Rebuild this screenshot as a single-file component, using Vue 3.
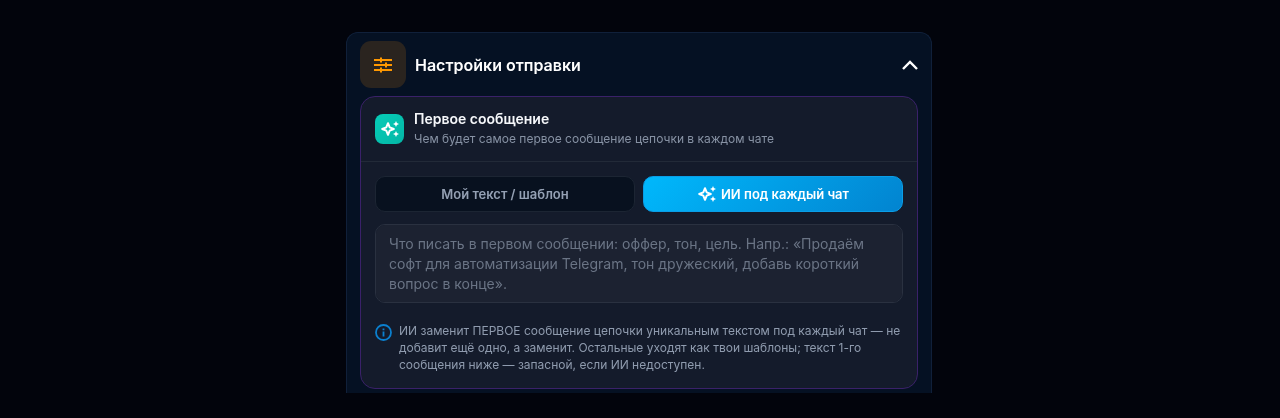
<template>
  <main class="page">
    <section class="panel">
      <button type="button" class="panel-head" :aria-expanded="open" @click="open = !open">
        <span class="panel-icon">
          <svg width="18" height="16" viewBox="0 0 18 16" fill="none" stroke="currentColor" stroke-width="2">
            <path d="M0 3h18M0 8h18M0 13h18" />
            <path d="M7 .5v5M12 5.500v5M7 10.500v5" />
          </svg>
        </span>
        <span class="panel-title">Настройки отправки</span>
        <svg class="chevron" :class="{ closed: !open }" width="16" height="10" viewBox="0 0 16 10" fill="none" stroke="currentColor" stroke-width="2.4">
          <path d="M1 9l7-7 7 7" />
        </svg>
      </button>

      <div v-if="open" class="card">
        <header class="card-head">
          <span class="card-icon">
            <svg class="sparkles" width="20" height="20" viewBox="0 0 20 20">
              <path class="star" :d="star" />
              <path class="dots" :d="dots" />
            </svg>
          </span>
          <div>
            <h2 class="card-title">Первое сообщение</h2>
            <p class="card-sub">Чем будет самое первое сообщение цепочки в каждом чате</p>
          </div>
        </header>

        <div class="card-body">
          <div class="modes">
            <button
              v-for="m in modes"
              :key="m.id"
              type="button"
              class="mode"
              :class="{ active: mode === m.id }"
              :aria-pressed="mode === m.id"
              @click="mode = m.id"
            >
              <svg v-if="m.icon" class="sparkles" width="20" height="20" viewBox="0 0 20 20">
                <path class="star" :d="star" />
                <path class="dots" :d="dots" />
              </svg>
              <span>{{ m.label }}</span>
            </button>
          </div>

          <textarea v-model="prompt" class="prompt" rows="3" aria-label="Первое сообщение" :placeholder="placeholder"></textarea>

          <div class="hint">
            <svg width="17" height="17" viewBox="0 0 17 17" fill="none" stroke="currentColor" stroke-width="1.8">
              <circle cx="8.5" cy="8.5" r="7.5" />
              <path d="M8.5 7.5v5M8.5 4.4v1.8" />
            </svg>
            <p>
              ИИ заменит ПЕРВОЕ сообщение цепочки уникальным текстом под каждый чат — не добавит ещё одно, а заменит.
              Остальные уходят как твои шаблоны; текст 1-го сообщения ниже — запасной, если ИИ недоступен.
            </p>
          </div>
        </div>
      </div>
    </section>
  </main>
</template>

<script setup>
import { ref } from 'vue'

const open = ref(true)
const mode = ref('ai')
const prompt = ref('')

const modes = [
  { id: 'own', label: 'Мой текст / шаблон', icon: false },
  { id: 'ai', label: 'ИИ под каждый чат', icon: true },
]

const placeholder =
  'Что писать в первом сообщении: оффер, тон, цель. Напр.: «Продаём софт для автоматизации Telegram, тон дружеский, добавь короткий вопрос в конце».'

// hollow four-point star and two small solid ones
const star = 'M8 4.2L9.700 8.300L13.800 10L9.700 11.700L8 15.800L6.300 11.700L2.200 10L6.300 8.300Z'
const dots =
  'M16 2l.9 2.100L19 5l-2.100.9L16 8l-.9-2.100L13 5l2.100-.9zM16 12l.9 2.100L19 15l-2.100.9L16 18l-.9-2.100L13 15l2.100-.9z'
</script>

<style>
body {
  margin: 0;
  background: #02040c;
}
</style>

<style scoped>
.page {
  box-sizing: border-box;
  padding: 32px 18px 25px 16px;
  font-family: Inter, "Noto Sans", sans-serif;
  color: #f5f7fa;
}
.panel {
  box-sizing: border-box;
  max-width: 586px;
  margin: 0 auto;
  padding: 8px 13px 4px;
  border: 1px solid #10203a;
  border-bottom: 0;
  border-radius: 12px 12px 0 0;
  background: #051123;
}
button {
  font-family: inherit;
  cursor: pointer;
}
.panel-head {
  display: flex;
  align-items: center;
  gap: 9px;
  width: 100%;
  margin-bottom: 8px;
  padding: 0;
  border: 0;
  background: none;
  color: #fff;
  text-align: left;
}
.panel-icon {
  display: flex;
  align-items: center;
  justify-content: center;
  width: 46px;
  height: 47px;
  border-radius: 11px;
  background: #2a241f;
  color: #ff9800;
}
.panel-title {
  flex: 1;
  font-size: 16px;
  font-weight: 600;
  line-height: 24px;
}
.chevron.closed {
  transform: rotate(180deg);
}
.sparkles {
  flex: none;
}
.star {
  fill: none;
  stroke: currentColor;
  stroke-width: 2;
  stroke-linejoin: round;
}
.dots {
  fill: currentColor;
}
.card {
  border: 1px solid #3a2169;
  border-radius: 15px;
  background: #141b2b;
}
.card-head {
  display: flex;
  align-items: center;
  gap: 10px;
  padding: 11px 14px 12px;
  border-bottom: 1px solid #222a38;
}
.card-icon {
  display: flex;
  align-items: center;
  justify-content: center;
  width: 29px;
  height: 30px;
  border-radius: 8px;
  background: linear-gradient(135deg, #06cdb8, #04b6a6);
  color: #fff;
}
.card-title,
.card-sub {
  margin: 0;
}
.card-title {
  font-size: 14px;
  font-weight: 600;
  line-height: 21px;
}
.card-sub {
  font-size: 12px;
  line-height: 20px;
  color: #8792a4;
}
.card-body {
  padding: 14px 14px 15px;
}
.modes {
  display: grid;
  grid-template-columns: 1fr 1fr;
  gap: 8px;
}
.mode {
  display: flex;
  align-items: center;
  justify-content: center;
  gap: 4px;
  height: 36px;
  border: 1px solid #1c2533;
  border-radius: 10px;
  background: #08111f;
  color: #94a0b3;
  font-size: 13px;
  font-weight: 600;
}
.mode.active {
  border-color: #0a9de6;
  background: linear-gradient(135deg, #00b8fc, #0284d0);
  color: #fff;
}
.prompt {
  display: block;
  box-sizing: border-box;
  width: 100%;
  height: 79px;
  margin-top: 12px;
  padding: 9px 13px;
  border: 1px solid #2a3140;
  border-radius: 10px;
  background: #1c2231;
  color: #f5f7fa;
  font-family: inherit;
  font-size: 14px;
  line-height: 20px;
  resize: none;
}
.prompt::placeholder {
  color: #6a7485;
  opacity: 1;
}
.hint {
  display: flex;
  gap: 7px;
  margin-top: 19px;
  color: #8f9bae;
}
.hint svg {
  flex: none;
  margin-top: 2px;
  color: #0b80cf;
}
.hint p {
  margin: 0;
  font-size: 12px;
  line-height: 17px;
}
</style>
